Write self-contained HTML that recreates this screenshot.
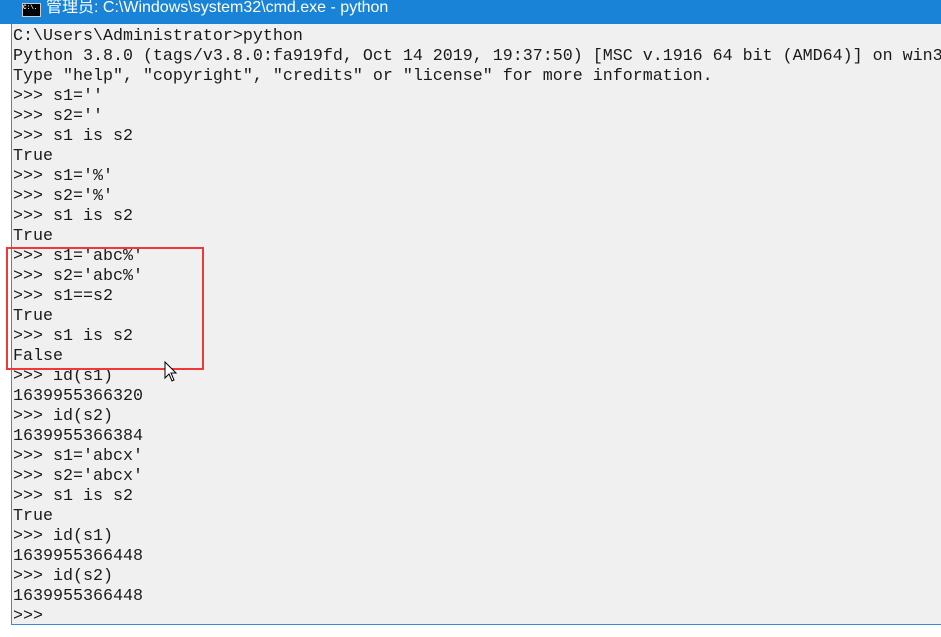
<!DOCTYPE html>
<html><head><meta charset="utf-8"><style>
html,body{margin:0;padding:0;width:941px;height:637px;overflow:hidden;background:#fff;position:relative}
.title{position:absolute;left:0;top:0;width:941px;height:24px;background:#1883d7;color:#fff;font-family:"Liberation Sans","Noto Sans CJK SC",sans-serif;font-size:16px;line-height:18px}
.title span{position:absolute;left:46px;top:-1px}
.ico{position:absolute;left:22px;top:3px;width:17px;height:12px;background:#000;border:1px solid #ccc;color:#fff;font:bold 6px "Liberation Mono",monospace;line-height:8px}
.win{position:absolute;left:11px;top:24px;width:940px;height:600px;background:#f0f0f0;border-left:1px solid #3a8ad6;border-bottom:1px solid #3a8ad6}
pre{margin:0;position:absolute;left:1px;top:3px;font-family:"Liberation Mono","Noto Sans CJK SC",monospace;font-size:16.67px;line-height:20px;color:#1a1a1a}
.red{position:absolute;left:6px;top:247px;width:194px;height:119px;border:2px solid #f03838}
</style></head><body>
<div class="title"><div class="ico">C:\.</div><span>管理员: C:\Windows\system32\cmd.exe - python</span></div>
<div class="win"><pre>C:\Users\Administrator&gt;python
Python 3.8.0 (tags/v3.8.0:fa919fd, Oct 14 2019, 19:37:50) [MSC v.1916 64 bit (AMD64)] on win32
Type "help", "copyright", "credits" or "license" for more information.
&gt;&gt;&gt; s1=''
&gt;&gt;&gt; s2=''
&gt;&gt;&gt; s1 is s2
True
&gt;&gt;&gt; s1='%'
&gt;&gt;&gt; s2='%'
&gt;&gt;&gt; s1 is s2
True
&gt;&gt;&gt; s1='abc%'
&gt;&gt;&gt; s2='abc%'
&gt;&gt;&gt; s1==s2
True
&gt;&gt;&gt; s1 is s2
False
&gt;&gt;&gt; id(s1)
1639955366320
&gt;&gt;&gt; id(s2)
1639955366384
&gt;&gt;&gt; s1='abcx'
&gt;&gt;&gt; s2='abcx'
&gt;&gt;&gt; s1 is s2
True
&gt;&gt;&gt; id(s1)
1639955366448
&gt;&gt;&gt; id(s2)
1639955366448
&gt;&gt;&gt;</pre></div>
<div class="red"></div>
<svg style="position:absolute;left:164px;top:361px" width="14" height="22" viewBox="0 0 14 22"><path d="M1 1 L1 17 L5 13 L8 20 L10 19 L7 12 L12 12 Z" fill="#fff" stroke="#000" stroke-width="1"/></svg>
</body></html>
